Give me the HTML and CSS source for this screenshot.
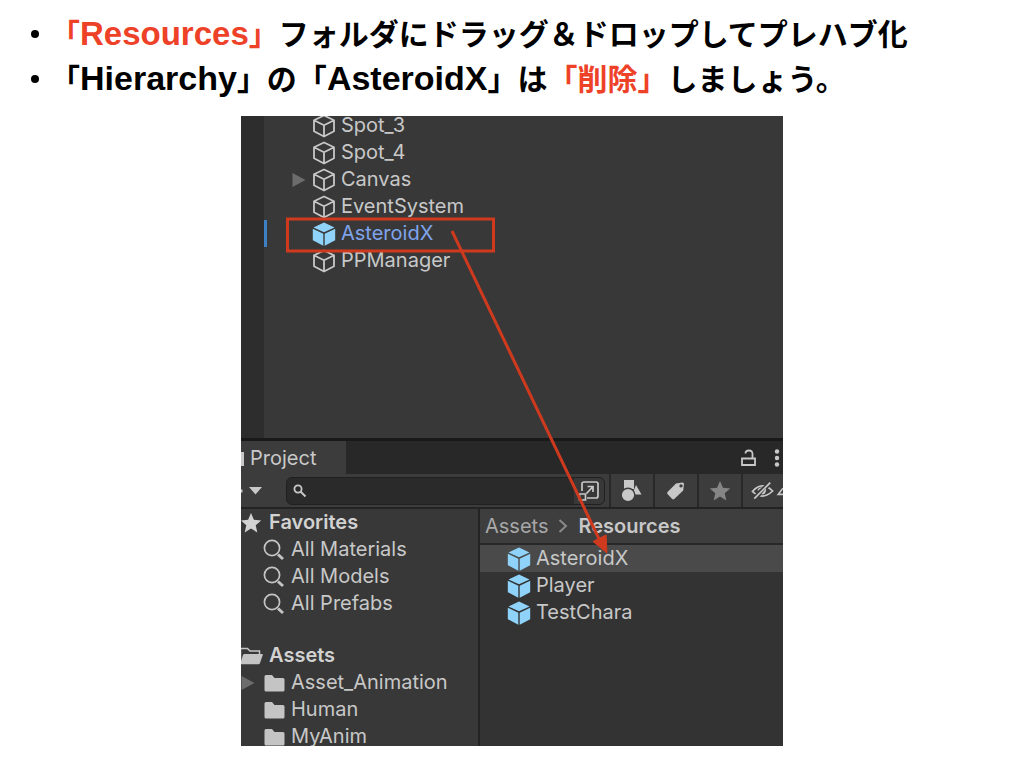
FILE: index.html
```html
<!DOCTYPE html>
<html lang="ja">
<head>
<meta charset="utf-8">
<meta name="viewport" content="width=device-width, initial-scale=1">
<title>プレハブ化</title>
<link rel="stylesheet" href="styles.css">
</head>
<body>
<svg class="symbols" aria-hidden="true">
  <symbol id="cube" viewBox="0 0 24 24"><path d="M12 1.500 22 6.300v11L12 22.500 2 17.300v-11zM2 6.300l10 5 10-5M12 11.300v11" fill="none" stroke="#c8c8c8" stroke-width="1.800" stroke-linejoin="round"/></symbol>
  <symbol id="prefab" viewBox="0 0 24 24"><path d="M12 .5 22.500 5.400 12 10.300 1.500 5.400zM.8 6.700l10.500 5v12L.8 18.200zM23.200 6.700l-10.500 5v12l10.500-5.500z" fill="#8fd3fb"/></symbol>
  <symbol id="lens" viewBox="0 0 24 24"><circle cx="10" cy="10" r="7.600" fill="none" stroke="#c4c4c4" stroke-width="1.700"/><path d="m16 16.500 5 4.500" stroke="#c4c4c4" stroke-width="3"/></symbol>
  <symbol id="folder" viewBox="0 0 24 24"><path d="M2.500 5.500q0-1.500 1.500-1.500h6L12.500 7H21q1.500 0 1.500 1.500V19q0 1.500-1.500 1.500H4q-1.500 0-1.500-1.500z" fill="#c4c4c4"/></symbol>
  <symbol id="star" viewBox="0 0 24 24"><path d="m12 2 2.900 6.700 7.300.7-5.500 4.800 1.600 7.200-6.300-3.800-6.300 3.800 1.600-7.200L1.800 9.400l7.300-.7z" fill="currentColor"/></symbol>
  <symbol id="fold" viewBox="0 0 14 16"><path d="m.5 1 13 7-13 7z" fill="#6c6c6c"/></symbol>
</svg>

<main class="slide">
  <ul class="notes">
    <li><span class="mark">「<span class="latin">Resources</span>」</span>フォルダにドラッグ＆ドロップしてプレハブ化</li>
    <li>「<span class="latin wide">Hierarchy</span>」の「<span class="latin wide">AsteroidX</span>」は<span class="mark">「削除」</span>しましょう。</li>
  </ul>

  <div class="editor">
    <section class="hierarchy" aria-label="Hierarchy">
      <ul class="tree">
        <li><span class="slot"></span><svg class="icon"><use href="#cube"/></svg>Spot_3</li>
        <li><span class="slot"></span><svg class="icon"><use href="#cube"/></svg>Spot_4</li>
        <li><span class="slot"><svg class="fold"><use href="#fold"/></svg></span><svg class="icon"><use href="#cube"/></svg>Canvas</li>
        <li><span class="slot"></span><svg class="icon"><use href="#cube"/></svg>EventSystem</li>
        <li class="instance"><span class="slot"></span><svg class="icon"><use href="#prefab"/></svg>AsteroidX</li>
        <li><span class="slot"></span><svg class="icon"><use href="#cube"/></svg>PPManager</li>
      </ul>
    </section>

    <section class="project" aria-label="Project">
      <div class="tabs">
        <button class="tab" type="button">Project</button>
        <button class="plain lock" type="button" aria-label="Lock"><svg width="18" height="20" viewBox="0 0 18 20"><path d="M2 10.500h13v6.500H2zM12.500 10V6q0-3.500-3.500-3.500T5.500 5.500" fill="none" stroke="#c8c8c8" stroke-width="1.800"/></svg></button>
        <button class="plain" type="button" aria-label="Menu"><svg width="6" height="18" viewBox="0 0 6 18"><g fill="#c8c8c8"><circle cx="3" cy="2.500" r="2.200"/><circle cx="3" cy="9" r="2.200"/><circle cx="3" cy="15.500" r="2.200"/></g></svg></button>
      </div>

      <div class="toolbar">
        <button class="plain create" type="button" aria-label="Create"><svg width="28" height="10" viewBox="0 0 28 10"><path d="M0 3.500h1.500v3H0zM8 1h13l-6.500 7.500z" fill="#c8c8c8"/></svg></button>
        <div class="search">
          <svg width="14" height="14" viewBox="0 0 14 14"><circle cx="5" cy="5" r="3.600" fill="none" stroke="#c8c8c8" stroke-width="1.800"/><path d="m7.500 7.500 5 5" stroke="#c8c8c8" stroke-width="2"/></svg>
          <input type="search" aria-label="Search">
          <button class="plain expand" type="button" aria-label="Open search"><svg width="22" height="22" viewBox="0 0 22 22"><g fill="none" stroke="#c8c8c8" stroke-width="1.700"><path d="M4 11V4q0-2 2-2h12q2 0 2 2v12q0 2-2 2H9M1.500 14h6v6h-6zM8.500 13.500l6.500-7M9.500 6.500H15V12"/></g></svg></button>
        </div>
        <button class="tool" type="button" aria-label="Filter by type"><svg width="24" height="24" viewBox="0 0 24 24"><path d="M4 1h10v9H4zM16 6l5.500 9.500H12z" fill="#c8c8c8"/><circle cx="8" cy="16" r="6.800" fill="#c8c8c8" stroke="#3c3c3c" stroke-width="1.400"/></svg></button>
        <button class="tool" type="button" aria-label="Filter by label"><svg width="22" height="22" viewBox="0 0 22 22"><path fill-rule="evenodd" d="M11 3.500 17.500 2.500q1.500 0 1.500 1.500l-.8 6.500-9 8.500q-1 .8-2 0l-4.700-5q-.8-1 0-2zM16 4.200a1.700 1.700 0 1 0 .1 3.400A1.700 1.700 0 0 0 16 4.200z" fill="#c8c8c8"/></svg></button>
        <button class="tool faded" type="button" aria-label="Favorite"><svg width="24" height="24"><use href="#star"/></svg></button>
        <button class="tool hidden-items" type="button" aria-label="Hidden items"><svg width="34" height="24" viewBox="0 0 34 24"><g fill="none" stroke="#c8c8c8" stroke-width="1.800"><path d="M1.500 12.500Q12 1 23 12 12 22.500 1.500 12.500z"/><path d="m3.500 20 17-17" stroke="#3c3c3c" stroke-width="5"/><path d="m3.500 20 17-17"/></g><path d="M11 15.500q4 1 5-4V9zM7 12q0-4 5-4z" fill="#c8c8c8"/><path d="m34 9-5 6.500h5" fill="none" stroke="#c8c8c8" stroke-width="1.800"/></svg></button>
      </div>

      <div class="panes">
        <nav class="folders" aria-label="Folders">
          <ul>
            <li class="root"><svg class="icon"><use href="#star"/></svg>Favorites</li>
            <li class="child"><svg class="icon"><use href="#lens"/></svg>All Materials</li>
            <li class="child"><svg class="icon"><use href="#lens"/></svg>All Models</li>
            <li class="child"><svg class="icon"><use href="#lens"/></svg>All Prefabs</li>
          </ul>
          <ul>
            <li class="root"><svg class="icon" viewBox="0 0 24 24"><path d="M1.500 19V4.500h7L11 7h9.500v3" fill="none" stroke="#c4c4c4" stroke-width="1.500"/><path d="M5.500 10H23q1.200 0 .8 1L21 19q-.4 1.200-1.500 1.200H2q-1 0-.6-1L4 11q.4-1 1.500-1z" fill="#c4c4c4"/></svg>Assets</li>
            <li class="child open"><svg class="fold"><use href="#fold"/></svg><svg class="icon"><use href="#folder"/></svg>Asset_Animation</li>
            <li class="child"><svg class="icon"><use href="#folder"/></svg>Human</li>
            <li class="child"><svg class="icon"><use href="#folder"/></svg>MyAnim</li>
          </ul>
        </nav>
        <div class="contents">
          <div class="path"><span>Assets</span><svg width="10" height="14" viewBox="0 0 10 14"><path d="m1.500 1 6.500 6-6.500 6" fill="none" stroke="#8a8a8a" stroke-width="2"/></svg><strong>Resources</strong></div>
          <ul>
            <li class="selected"><svg class="icon"><use href="#prefab"/></svg>AsteroidX</li>
            <li><svg class="icon"><use href="#prefab"/></svg>Player</li>
            <li><svg class="icon"><use href="#prefab"/></svg>TestChara</li>
          </ul>
        </div>
      </div>
    </section>

    <svg class="annotation" width="542" height="630" viewBox="0 0 542 630" aria-hidden="true">
      <rect x="46.500" y="103" width="206" height="32" fill="none" stroke="#cf3a1f" stroke-width="3"/>
      <path d="m211 115 148 310" stroke="#cf3a1f" stroke-width="3"/>
      <path d="m366 437-14-11.500 13-6.500z" fill="#cf3a1f" stroke="#cf3a1f"/>
    </svg>
  </div>
</main>
</body>
</html>
```
FILE: styles.css
```css
* {
  box-sizing: border-box;
}

body {
  margin: 0;
  background: #fff;
  color: #000;
}

ul {
  list-style: none;
  margin: 0;
  padding: 0;
}

.symbols {
  position: absolute;
  width: 0;
  height: 0;
}

.slide {
  padding: 10px 20px 22px;
}

.notes {
  font-family: "Noto Sans CJK JP", sans-serif;
  font-size: 30px;
  font-weight: 700;
  line-height: 45px;
  margin-bottom: 16px;
}

.notes li {
  display: block;
  padding-left: 30px;
  text-indent: -30px;
}

.notes li::before {
  content: "";
  display: inline-block;
  width: 8px;
  height: 8px;
  margin: 0 11px;
  border-radius: 50%;
  background: #000;
  vertical-align: 7px;
}

.latin {
  font-family: "Liberation Sans", sans-serif;
  font-size: 33px;
  line-height: 1;
}

.wide {
  font-size: 34px;
}

.mark {
  color: #ee4228;
}

/* Editor window */

.editor {
  position: relative;
  overflow: hidden;
  max-width: 542px;
  margin: 0 auto;
  background: #383838;
  color: #c8c8c8;
  font-family: Inter, sans-serif;
  font-size: 20px;
  line-height: 27px;
}

.editor li {
  display: flex;
  align-items: center;
  height: 27px;
  white-space: nowrap;
}

.icon {
  flex: none;
  width: 24px;
  height: 24px;
  margin-right: 5px;
}

.fold {
  display: block;
  width: 14px;
  height: 16px;
}

.plain {
  display: flex;
  padding: 0;
  border: 0;
  background: none;
}

.hierarchy {
  display: flow-root;
  min-height: 322px;
  border-left: 23px solid #2d2d2d;
}

.tree {
  margin-top: -4px;
}

.tree li {
  padding-left: 28px;
}

.slot {
  width: 20px;
}

.tree .instance {
  color: #7fa4ec;
  padding-left: 25px;
  border-left: 3px solid #3d80c4;
}

/* Project panel */

.project {
  border-top: 3px solid #191919;
}

.tabs {
  display: flex;
  align-items: center;
  gap: 16px;
  height: 33px;
  padding-right: 3px;
  background: #282828;
}

.tab {
  align-self: stretch;
  width: 105px;
  padding: 2px 0 0 6px;
  border: 0;
  border-left: 3px solid #c8c8c8;
  border-image: linear-gradient(#3c3c3c 35%, #c8c8c8 35% 75%, #3c3c3c 75%) 1;
  border-width: 0 0 0 3px;
  background: #3c3c3c;
  color: inherit;
  font: inherit;
  text-align: left;
}

.lock {
  margin-left: auto;
}

.toolbar {
  display: flex;
  align-items: center;
  height: 35px;
  background: #3c3c3c;
  border-bottom: 2px solid #232323;
}

.create {
  width: 45px;
}

.search {
  display: flex;
  flex: 1;
  align-items: center;
  min-width: 0;
  height: 28px;
  margin-right: 4px;
  padding-left: 6px;
  overflow: hidden;
  border: 1px solid #202020;
  border-radius: 6px;
  background: #2a2a2a;
}

.search input {
  flex: 1;
  min-width: 0;
  height: 24px;
  border: 0;
  outline: 0;
  background: none;
  color: inherit;
  font: inherit;
}

.expand {
  align-items: center;
  justify-content: center;
  width: 30px;
  height: 26px;
  background: #383838;
}

.tool {
  display: flex;
  flex: none;
  align-items: center;
  justify-content: center;
  width: 44px;
  height: 33px;
  padding: 0;
  overflow: hidden;
  border: 0;
  border-left: 2px solid #282828;
  background: none;
}

.faded {
  color: #858585;
}

.hidden-items {
  justify-content: flex-start;
  width: 42px;
  padding-left: 8px;
}

.panes {
  display: flex;
  min-height: 237px;
}

.folders {
  display: flex;
  flex: none;
  flex-direction: column;
  gap: 25px;
  width: 239px;
  margin-bottom: -4px;
  border-right: 2px solid #232323;
}

.root {
  font-weight: 600;
  color: #d2d2d2;
}

.root .icon {
  margin-left: -2px;
  margin-right: 6px;
}

.child {
  padding-left: 21px;
}

.open {
  padding-left: 0;
}

.open .fold {
  margin-right: 7px;
}

.contents {
  flex: 1;
  min-width: 0;
  background: #333;
}

.path {
  display: flex;
  align-items: center;
  gap: 10px;
  height: 36px;
  padding-left: 5px;
  border-bottom: 2px solid #282828;
  background: #3e3e3e;
  color: #a8a8a8;
}

.path strong {
  font-weight: 600;
  color: #c8c8c8;
}

.contents li {
  padding-left: 27px;
}

.contents .selected {
  background: #4a4a4a;
}

.annotation {
  position: absolute;
  top: 0;
  left: 0;
}
```
